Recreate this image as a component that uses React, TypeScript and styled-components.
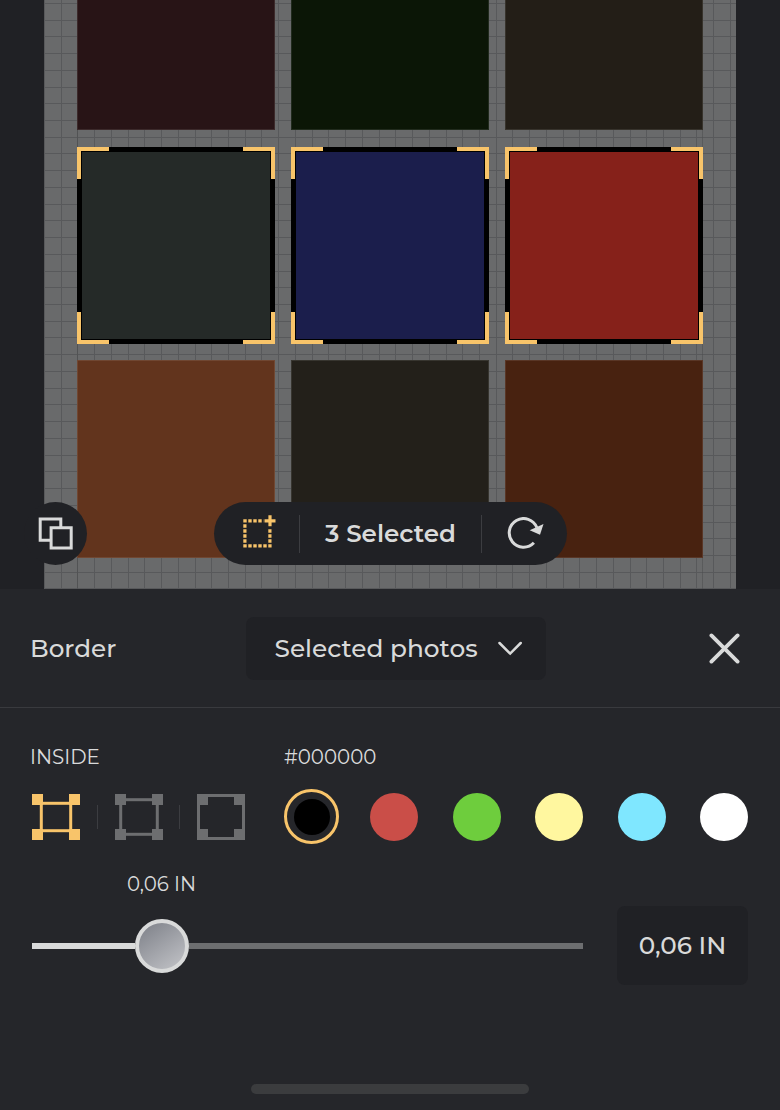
import React from "react";
import styled, { createGlobalStyle } from "styled-components";

const GlobalStyle = createGlobalStyle`
  * { box-sizing: border-box; }
  body {
    margin: 0;
    background: #25262a;
    color: #d9dada;
    font-family: Montserrat, Inter, "Open Sans", sans-serif;
  }
  button { border: 0; padding: 0; background: none; color: inherit; font: inherit; }
  svg { display: block; flex: none; }
`;

const Screen = styled.main`
  width: 780px;
  height: 1110px;
  display: flex;
  flex-direction: column;
  overflow: hidden;
`;

const Workspace = styled.section`
  position: relative;
  height: 589px;
  flex: none;
  padding: 0 44px;
  display: flex;
  background: #202125;
  overflow: hidden;
`;

const Sheet = styled.div`
  flex: 1;
  display: flex;
  flex-direction: column;
  justify-content: flex-end;
  padding: 0 33px 31.5px;
  background:
    linear-gradient(#4c4d4e88, #4c4d4e88) 33px 0 / 1px 100% no-repeat,
    linear-gradient(#4c4d4e88, #4c4d4e88) 658px 0 / 1px 100% no-repeat,
    repeating-linear-gradient(90deg, #58595b 0 1px, transparent 1px 16.73px),
    repeating-linear-gradient(180deg, transparent 0 2.9px, #58595b 2.9px 3.9px, transparent 3.9px 16.73px),
    #696a6b;
`;

const PhotoGrid = styled.div`
  flex: none;
  display: grid;
  grid-template-columns: repeat(3, 197.6px);
  grid-auto-rows: 197.2px;
  gap: 16.4px 16.6px;
`;

const Photo = styled.div<{ $color: string; $selected?: boolean }>`
  position: relative;
  background: ${(p) => p.$color};
  border: ${(p) => (p.$selected ? "5px solid #000" : "1px solid #ffffff18")};
`;

const Corner = styled.span<{ $v: "top" | "bottom"; $h: "left" | "right" }>`
  position: absolute;
  width: 32px;
  height: 32px;
  ${(p) => p.$v}: -5px;
  ${(p) => p.$h}: -5px;
  border: 0 solid #f8c46a;
  border-${(p) => p.$v}-width: 4px;
  border-${(p) => p.$h}-width: 4px;
`;

const LayersButton = styled.button`
  position: absolute;
  left: 24px;
  top: 502px;
  width: 63px;
  height: 63px;
  border-radius: 50%;
  background: #202125;
  display: grid;
  place-items: center;
`;

const SelectionBar = styled.div`
  position: absolute;
  left: 214px;
  top: 502px;
  width: 353px;
  height: 63px;
  border-radius: 32px;
  background: #202125;
  display: grid;
  grid-template-columns: 85px 1px 181px 1px 85px;
  align-items: center;
`;

const Separator = styled.span<{ $height: number }>`
  width: 1px;
  height: ${(p) => p.$height}px;
  background: #3c3d41;
`;

const BarCell = styled.div<{ $left?: number; $bottom?: number }>`
  display: flex;
  justify-content: center;
  padding: 0 0 ${(p) => p.$bottom ?? 0}px ${(p) => p.$left ?? 0}px;
`;

const Label = styled.span<{ $size: number; $weight?: number }>`
  display: block;
  white-space: nowrap;
  font-size: ${(p) => p.$size}px;
  font-weight: ${(p) => p.$weight ?? 400};
  line-height: 32px;
`;

const Header = styled.header`
  height: 119px;
  flex: none;
  border-bottom: 1px solid #393a3e;
  padding: 0 40px 0 30px;
  display: grid;
  grid-template-columns: 216px 300px 1fr;
  align-items: center;
`;

const Select = styled.button`
  height: 63px;
  border-radius: 8px;
  background: #202125;
  display: flex;
  align-items: center;
  justify-content: space-between;
  padding: 0 24px 0 28.5px;
`;

const CloseButton = styled.button`
  justify-self: end;
`;

const Controls = styled.section`
  display: grid;
  grid-template-columns: 254px 1fr;
  padding: 33px 0 0 30px;
`;

const Group = styled.div`
  display: flex;
  flex-direction: column;
  gap: 16px;
`;

const Modes = styled.div`
  height: 55px;
  display: flex;
  align-items: center;
  gap: 16.75px;
  padding-left: 2px;
`;

const Swatches = styled.div`
  height: 55px;
  display: grid;
  grid-template-columns: repeat(6, 55px);
  column-gap: 27.5px;
  place-items: center;
`;

const Swatch = styled.button<{ $color: string }>`
  width: 48px;
  height: 48px;
  border-radius: 50%;
  background: ${(p) => p.$color};
`;

const ActiveSwatch = styled.span`
  width: 55px;
  height: 55px;
  border: 3px solid #f8c46a;
  border-radius: 50%;
  display: grid;
  place-items: center;
  &::after {
    content: "";
    width: 36px;
    height: 36px;
    border-radius: 50%;
    background: #000;
  }
`;

const SliderRow = styled.section`
  display: flex;
  align-items: flex-end;
  justify-content: space-between;
  padding: 23px 32px 0;
`;

const Slider = styled.div`
  width: 551px;
  height: 118px;
  display: flex;
  flex-direction: column;
`;

const Bubble = styled.div`
  width: 259px;
  padding-top: 1px;
  text-align: center;
`;

const Rail = styled.div`
  height: 54px;
  margin-top: 19px;
  display: flex;
  align-items: center;
`;

const Fill = styled.span`
  width: 103px;
  height: 6px;
  background: #d9dada;
`;

const Remainder = styled.span`
  flex: 1;
  height: 6px;
  background: #6d6e70;
`;

const Thumb = styled.span`
  width: 54px;
  height: 54px;
  border: 4px solid #d9dada;
  border-radius: 50%;
  background: linear-gradient(145deg, #7d8088 8%, #c5c6ca 95%) border-box;
`;

const ValueBox = styled.div`
  width: 131px;
  height: 79px;
  border-radius: 8px;
  background: #202125;
  display: grid;
  place-items: center;
  padding-bottom: 2px;
`;

const HomeIndicator = styled.span`
  width: 278px;
  height: 10px;
  border-radius: 5px;
  background: #3b3c3e;
  margin: auto auto 16px;
`;

const LayersIcon = () => (
  <svg width="35" height="33" viewBox="0 0 35 33" fill="none" stroke="#d9dada" strokeWidth="3">
    <path d="M12.4 23.3H2.2V2H22.8V11" />
    <path d="M13.1 10.7H33.2V31H13.1Z" />
  </svg>
);

const MultiSelectIcon = () => (
  <svg width="33" height="33" viewBox="0 0 33 33" fill="none" stroke="#f8c46a" strokeWidth="3.2">
    <path d="M.3 5.9H20.5M.3 30.9H28.6" strokeDasharray="3.4 1.6" />
    <path d="M1.9 9.3V28M26.9 14.3V28" strokeDasharray="3.4 1.6" />
    <path d="M21.5 5.8H32.5M27 .3V11.3" />
  </svg>
);

const RotateIcon = () => (
  <svg width="37" height="33" viewBox="0 0 37 33" fill="none">
    <path d="M26.9 25.7A14.3 14.3 0 1 1 29.8 10.5" stroke="#d9dada" strokeWidth="3" />
    <path d="M22.7 13.2L36.5 7L33 17.8Z" fill="#d9dada" />
  </svg>
);

const modeInset = { inside: 9.3, center: 5.7, outside: 1.5 };

const BorderModeIcon = ({ mode, active }: { mode: keyof typeof modeInset; active?: boolean }) => {
  const inset = modeInset[mode];
  const color = active ? "#f8c46a" : "#6d6e70";
  return (
    <svg width="48" height="46" viewBox="0 0 48 46" fill={color}>
      <rect x={inset} y={inset} width={48 - inset * 2} height={46 - inset * 2} fill="none" stroke={color} strokeWidth="3" />
      <path d="M0 0H11V11H0ZM37 0H48V11H37ZM0 35H11V46H0ZM37 35H48V46H37Z" />
    </svg>
  );
};

const photos = [
  { color: "#281416" },
  { color: "#0b1606" },
  { color: "#231e17" },
  { color: "#252a28", selected: true },
  { color: "#1b1e4c", selected: true },
  { color: "#86211a", selected: true },
  { color: "#62341d" },
  { color: "#23201a" },
  { color: "#482210" },
];

const palette = ["#ca4e48", "#6ecd3d", "#fff79f", "#7fe7ff", "#ffffff"];

export default function App() {
  return (
    <Screen>
      <GlobalStyle />
      <Workspace>
        <Sheet>
          <PhotoGrid>
            {photos.map((photo) => (
              <Photo key={photo.color} $color={photo.color} $selected={photo.selected}>
                {photo.selected && (
                  <>
                    <Corner $v="top" $h="left" />
                    <Corner $v="top" $h="right" />
                    <Corner $v="bottom" $h="left" />
                    <Corner $v="bottom" $h="right" />
                  </>
                )}
              </Photo>
            ))}
          </PhotoGrid>
        </Sheet>
        <LayersButton aria-label="Layers"><LayersIcon /></LayersButton>
        <SelectionBar>
          <BarCell $left={6} $bottom={4}><MultiSelectIcon /></BarCell>
          <Separator $height={38} />
          <BarCell $bottom={2}><Label $size={24.6} $weight={600}>3 Selected</Label></BarCell>
          <Separator $height={38} />
          <BarCell $left={2} $bottom={1}><RotateIcon /></BarCell>
        </SelectionBar>
      </Workspace>

      <Header>
        <Label $size={24.7} $weight={500}>Border</Label>
        <Select>
          <Label $size={24.8} $weight={500}>Selected photos</Label>
          <svg width="24" height="16" viewBox="0 0 24 16" fill="none" stroke="#d9dada" strokeWidth="2.5" strokeLinecap="round">
            <path d="M1.5 3L12.2 13.6L22.7 3" />
          </svg>
        </Select>
        <CloseButton aria-label="Close">
          <svg width="31" height="31" viewBox="0 0 31 31" fill="none" stroke="#d9dada" strokeWidth="3.8" strokeLinecap="round">
            <path d="M2.4 2.4L28.6 28.6M28.6 2.4L2.4 28.6" />
          </svg>
        </CloseButton>
      </Header>

      <Controls>
        <Group>
          <Label $size={19.8}>INSIDE</Label>
          <Modes>
            <BorderModeIcon mode="inside" active />
            <Separator $height={24} />
            <BorderModeIcon mode="center" />
            <Separator $height={24} />
            <BorderModeIcon mode="outside" />
          </Modes>
        </Group>
        <Group>
          <Label $size={19.8}>#000000</Label>
          <Swatches>
            <ActiveSwatch />
            {palette.map((color) => <Swatch key={color} $color={color} aria-label={color} />)}
          </Swatches>
        </Group>
      </Controls>

      <SliderRow>
        <Slider>
          <Bubble><Label $size={19.8}>0,06 IN</Label></Bubble>
          <Rail>
            <Fill />
            <Thumb />
            <Remainder />
          </Rail>
        </Slider>
        <ValueBox><Label $size={24.7} $weight={500}>0,06 IN</Label></ValueBox>
      </SliderRow>
      <HomeIndicator />
    </Screen>
  );
}
